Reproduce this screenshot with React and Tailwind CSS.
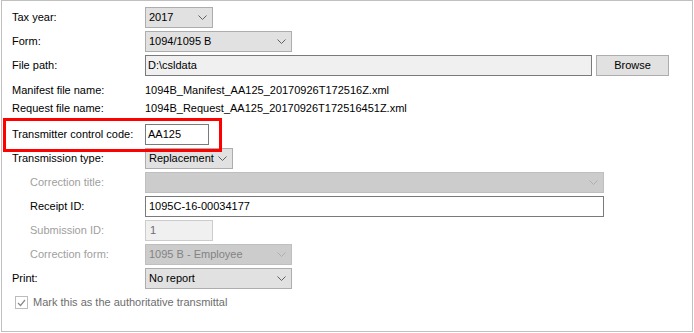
import React from 'react';

const Chevron = ({ color = '#606060' }) => (
  <svg width="9" height="5" viewBox="0 0 9 5" className="shrink-0">
    <polyline points="0.5,0.5 4.5,4.5 8.5,0.5" fill="none" stroke={color} strokeWidth="1" />
  </svg>
);

const Select = ({ value, width, disabled }) => (
  <div
    className={`h-[21px] flex items-center justify-between pl-[3px] pr-[5px] border ${
      disabled ? 'bg-[#cccccc] border-[#bfbfbf] text-[#838383]' : 'bg-[#e1e1e1] border-[#adadad] text-black'
    } ${width}`}
  >
    <span className="whitespace-nowrap">{value}</span>
    <Chevron color={disabled ? '#b0b0b0' : '#606060'} />
  </div>
);

const Row = ({ label, indent, muted, className = 'mt-[3px]', children }) => (
  <div className={`flex items-center h-[21px] ${className}`}>
    <div
      className={`shrink-0 ${indent ? 'w-[115px] pl-[18px] box-content' : 'w-[133px]'} ${
        muted ? 'text-[#a0a0a0]' : 'text-black'
      }`}
    >
      {label}
    </div>
    {children}
  </div>
);

export default function App() {
  return (
    <div className="w-[694px] h-[333px] bg-white" style={{ fontFamily: '"Liberation Sans", Arial, sans-serif' }}>
      <div className="ml-[1px] w-[692px] h-[332px] border border-[#c0c0c0] pl-[10px] pt-[6px] text-[11px] leading-none">
        <Row label="Tax year:" className="">
          <Select value="2017" width="w-[68px]" />
        </Row>
        <Row label="Form:">
          <Select value="1094/1095 B" width="w-[147px]" />
        </Row>
        <Row label="File path:">
          <div className="w-[447px] h-[21px] flex items-center pl-[2px] bg-[#f0f0f0] border border-[#7a7a7a]">D:\csldata</div>
          <button className="ml-[4px] w-[73px] h-[21px] bg-[#e1e1e1] border border-[#adadad] text-black">Browse</button>
        </Row>

        <div className="mt-[5px] flex items-center h-[18px]">
          <div className="w-[133px]">Manifest file name:</div>
          <div>1094B_Manifest_AA125_20170926T172516Z.xml</div>
        </div>
        <div className="flex items-center h-[18px]">
          <div className="w-[133px]">Request file name:</div>
          <div>1094B_Request_AA125_20170926T172516451Z.xml</div>
        </div>

        <div className="relative mt-[7px]">
          <Row label="Transmitter control code:" className="">
            <div className="w-[64px] h-[21px] flex items-center pl-[2px] bg-white border border-[#7a7a7a]">AA125</div>
          </Row>
          <div className="absolute left-[-9px] top-[-6px] w-[219px] h-[34px] border-[3px] border-[#ff0000]" />
        </div>

        <Row label="Transmission type:">
          <Select value="Replacement" width="w-[88px]" />
        </Row>
        <Row label="Correction title:" indent muted>
          <Select value="" width="w-[459px]" disabled />
        </Row>
        <Row label="Receipt ID:" indent>
          <div className="w-[459px] h-[21px] flex items-center pl-[3px] bg-white border border-[#7a7a7a]">1095C-16-00034177</div>
        </Row>
        <Row label="Submission ID:" indent muted>
          <div className="w-[68px] h-[21px] flex items-center pl-[4px] bg-[#f0f0f0] border border-[#cccccc] text-[#6d6d6d]">1</div>
        </Row>
        <Row label="Correction form:" indent muted>
          <Select value="1095 B - Employee" width="w-[147px]" disabled />
        </Row>
        <Row label="Print:">
          <Select value="No report" width="w-[147px]" />
        </Row>

        <div className="mt-[6px] flex items-center h-[15px] pl-[3px]">
          <div className="w-[13px] h-[13px] border border-[#bcbcbc] bg-white flex items-center justify-center">
            <svg width="9" height="8" viewBox="0 0 9 8">
              <polyline points="1,4 3.5,6.5 8,1" fill="none" stroke="#8a8a8a" strokeWidth="1.2" />
            </svg>
          </div>
          <span className="ml-[5px] text-[#6d6d6d]">Mark this as the authoritative transmittal</span>
        </div>
      </div>
    </div>
  );
}
